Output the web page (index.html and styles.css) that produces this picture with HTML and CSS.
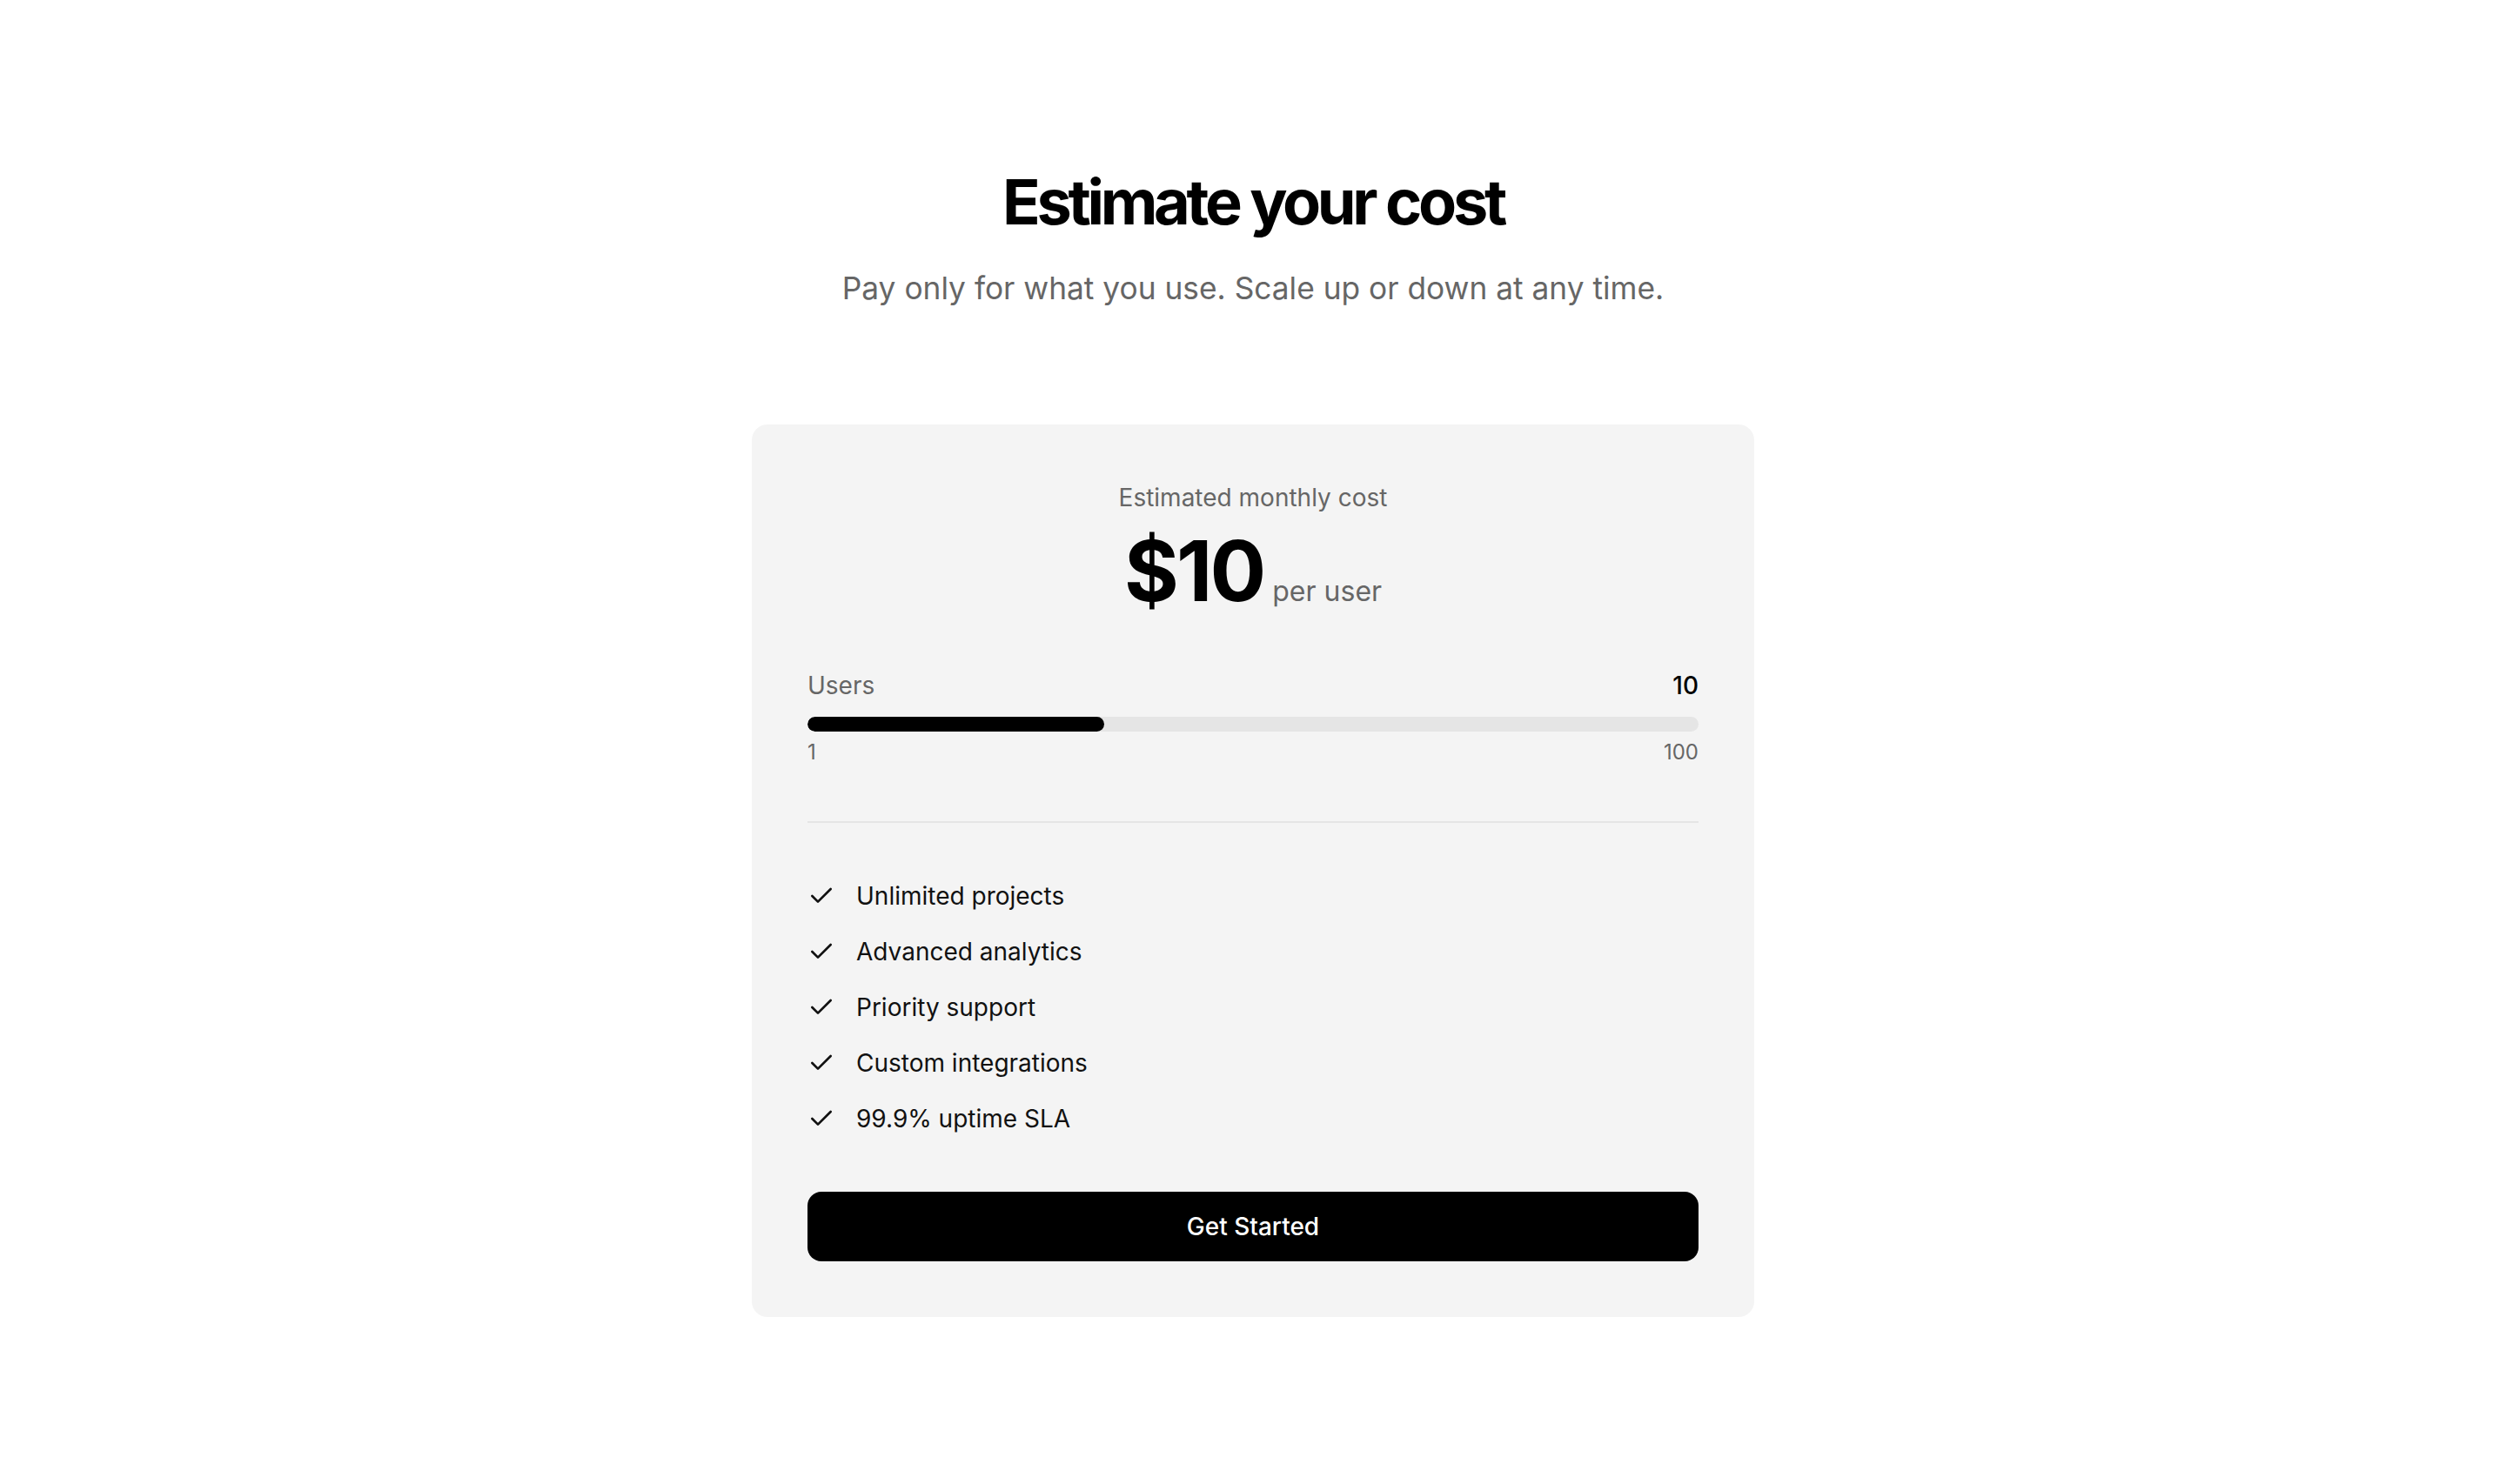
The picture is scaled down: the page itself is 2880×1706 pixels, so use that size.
FILE: index.html
```html
<!DOCTYPE html>
<html lang="en">
<head>
<meta charset="utf-8">
<title>Estimate your cost</title>
<link rel="stylesheet" href="styles.css">
</head>
<body>
<main class="page">
  <header class="intro">
    <h1 class="title">Estimate your cost</h1>
    <p class="subtitle">Pay only for what you use. Scale up or down at any time.</p>
  </header>
  <section class="card">
    <div class="estimate">
      <p class="estimate-label">Estimated monthly cost</p>
      <div class="price-row">
        <span class="price">$10</span>
        <span class="price-unit">per user</span>
      </div>
    </div>
    <div class="slider">
      <div class="slider-head">
        <span class="slider-label">Users</span>
        <span class="slider-value">10</span>
      </div>
      <div class="track"><div class="fill" style="width: 33.3%"></div></div>
      <div class="slider-range">
        <span>1</span>
        <span>100</span>
      </div>
    </div>
    <ul class="features">
      <li class="feature"><svg class="check" viewBox="0 0 24 24" fill="none" stroke="currentColor" stroke-width="2" stroke-linecap="round" stroke-linejoin="round"><path d="M20 6 9 17l-5-5"/></svg><span>Unlimited projects</span></li>
      <li class="feature"><svg class="check" viewBox="0 0 24 24" fill="none" stroke="currentColor" stroke-width="2" stroke-linecap="round" stroke-linejoin="round"><path d="M20 6 9 17l-5-5"/></svg><span>Advanced analytics</span></li>
      <li class="feature"><svg class="check" viewBox="0 0 24 24" fill="none" stroke="currentColor" stroke-width="2" stroke-linecap="round" stroke-linejoin="round"><path d="M20 6 9 17l-5-5"/></svg><span>Priority support</span></li>
      <li class="feature"><svg class="check" viewBox="0 0 24 24" fill="none" stroke="currentColor" stroke-width="2" stroke-linecap="round" stroke-linejoin="round"><path d="M20 6 9 17l-5-5"/></svg><span>Custom integrations</span></li>
      <li class="feature"><svg class="check" viewBox="0 0 24 24" fill="none" stroke="currentColor" stroke-width="2" stroke-linecap="round" stroke-linejoin="round"><path d="M20 6 9 17l-5-5"/></svg><span>99.9% uptime SLA</span></li>
    </ul>
    <button class="cta" type="button">Get Started</button>
  </section>
</main>
</body>
</html>
```

FILE: styles.css
```css
* { box-sizing: border-box; }

html, body {
  margin: 0;
  padding: 0;
  background: #ffffff;
}

body {
  font-family: Inter, "Noto Sans", "Liberation Sans", sans-serif;
  color: #0a0a0a;
}

.page {
  display: flex;
  flex-direction: column;
  align-items: center;
  padding: 192px 32px 128px;
}

.intro {
  display: flex;
  flex-direction: column;
  align-items: center;
  text-align: center;
}

.title {
  margin: 0;
  font-size: 72px;
  line-height: 80px;
  font-weight: 700;
  letter-spacing: -0.06em;
  color: #000;
}

.subtitle {
  margin: 32px 0 0;
  font-size: 35.3px;
  line-height: 56px;
  color: #666666;
}

.card {
  margin-top: 128px;
  width: 1152px;
  background: #f4f4f4;
  border-radius: 18px;
  padding: 64px;
  display: flex;
  flex-direction: column;
}

.estimate {
  display: flex;
  flex-direction: column;
  align-items: center;
}

.estimate-label {
  margin: 0;
  font-size: 28px;
  line-height: 40px;
  color: #666666;
}

.price-row {
  margin-top: 16px;
  display: flex;
  align-items: baseline;
  gap: 10px;
}

.price {
  font-size: 96px;
  line-height: 96px;
  font-weight: 700;
  letter-spacing: -0.03em;
  color: #000;
}

.price-unit {
  font-size: 32px;
  line-height: 40px;
  color: #666666;
}

.slider {
  margin-top: 64px;
  display: flex;
  flex-direction: column;
}

.slider-head {
  display: flex;
  justify-content: space-between;
  align-items: baseline;
  font-size: 28px;
  line-height: 40px;
}

.slider-label { color: #666666; }

.slider-value {
  color: #000;
  font-weight: 500;
}

.track {
  margin-top: 16px;
  height: 17px;
  border-radius: 999px;
  background: #e5e5e5;
  overflow: hidden;
}

.fill {
  height: 100%;
  background: #000;
  border-radius: 999px;
}

.slider-range {
  margin-top: 8px;
  display: flex;
  justify-content: space-between;
  font-size: 24px;
  line-height: 32px;
  color: #666666;
}

.features {
  list-style: none;
  margin: 63px 0 0;
  padding: 64px 0 0;
  border-top: 2px solid #e5e5e5;
  display: flex;
  flex-direction: column;
  gap: 24px;
}

.feature {
  display: flex;
  align-items: center;
  gap: 24px;
  font-size: 28px;
  line-height: 40px;
  color: #111111;
}

.check {
  width: 32px;
  height: 32px;
  flex: none;
  color: #111111;
}

.cta {
  margin-top: 64px;
  height: 80px;
  border: 0;
  border-radius: 16px;
  background: #000;
  color: #fff;
  font-family: inherit;
  font-size: 28px;
  font-weight: 500;
  cursor: pointer;
}
```
